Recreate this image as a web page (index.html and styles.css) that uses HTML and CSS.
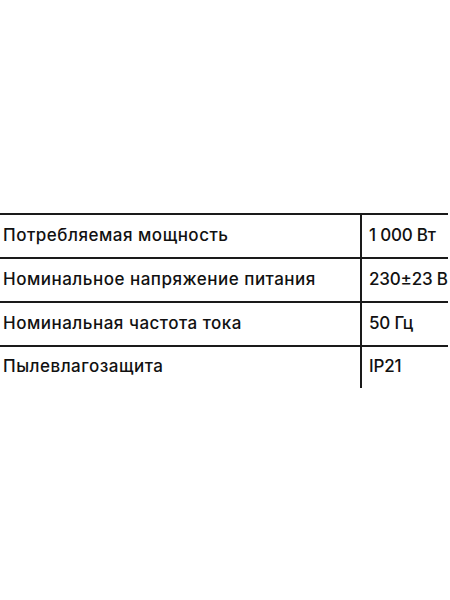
FILE: index.html
```html
<!DOCTYPE html>
<html lang="ru">
<head>
<meta charset="utf-8">
<link rel="stylesheet" href="styles.css">
</head>
<body>
<div class="page">
  <table class="specs">
    <tr><td class="name">Потребляемая мощность</td><td class="val">1 000 Вт</td></tr>
    <tr><td class="name">Номинальное напряжение питания</td><td class="val">230±23 В</td></tr>
    <tr><td class="name">Номинальная частота тока</td><td class="val">50 Гц</td></tr>
    <tr class="last"><td class="name">Пылевлагозащита</td><td class="val">IP21</td></tr>
  </table>
</div>
</body>
</html>
```

FILE: styles.css
```css
html, body {
  margin: 0;
  padding: 0;
  background: #ffffff;
}
.page {
  width: 450px;
  height: 600px;
  padding-top: 213px;
  box-sizing: border-box;
}
.specs {
  width: 448px;
  border-collapse: collapse;
  font-family: "Inter", "Open Sans", sans-serif;
  font-size: 17px;
  font-weight: 500;
  color: #111111;
}
.specs td {
  border-top: 2.5px solid #1a1a1a;
  height: 44px;
  padding: 0 0 2px 0;
  vertical-align: middle;
  box-sizing: border-box;
}
.specs .name {
  width: 361px;
  padding-left: 3px;
  letter-spacing: 0.5px;
  border-right: 2px solid #1a1a1a;
}
.specs .val {
  padding-left: 7px;
  letter-spacing: -0.2px;
  white-space: nowrap;
}
.specs .last td {
  height: 42px;
  padding-bottom: 4px;
}
```
